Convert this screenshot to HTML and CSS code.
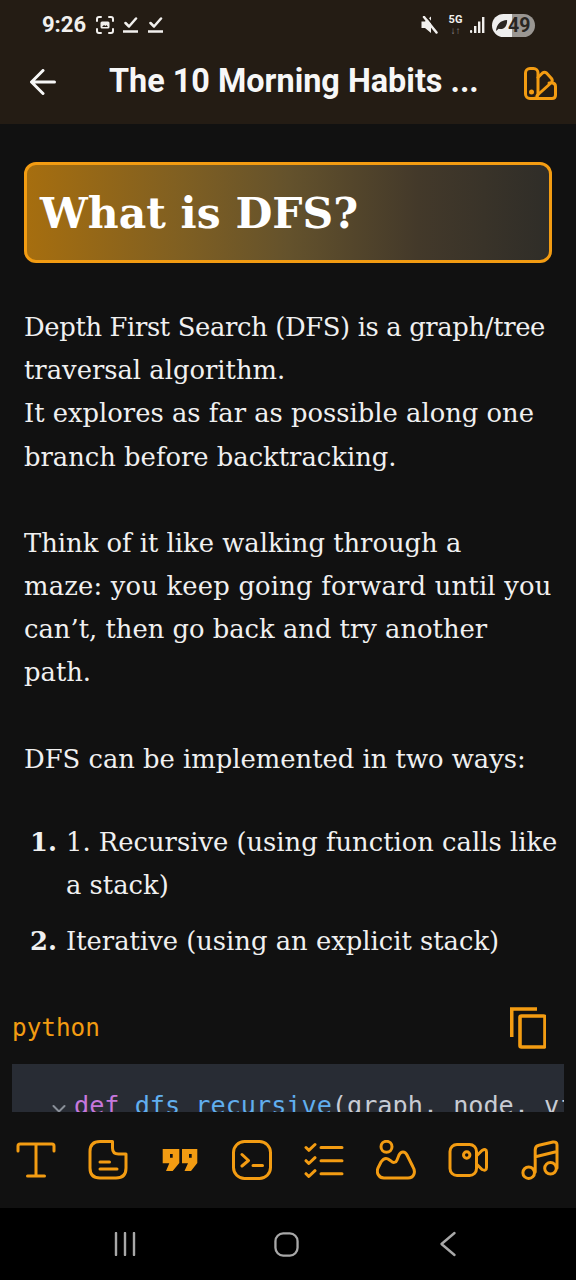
FILE: index.html
```html
<!DOCTYPE html>
<html lang="en">
<head>
<meta charset="utf-8">
<title>What is DFS?</title>
<link rel="stylesheet" href="styles.css">
</head>
<body>
<div class="phone">
  <header class="top">
    <div class="status">
      <span class="time">9:26</span>
      <svg class="st-shot" viewBox="0 0 18 18"><path d="M1 5V3Q1 1 3 1H5M13 1H15Q17 1 17 3V5M17 13V15Q17 17 15 17H13M5 17H3Q1 17 1 15V13"/><rect class="fill" x="4.500" y="5.500" width="9" height="7" rx="1.500"/><path class="dark" d="M6 11L8 9L9.500 10L10.500 9L12 11Z"/></svg>
      <svg class="st-check" viewBox="0 0 15 18"><path d="M2.500 7L6 10.500L13 2.500M0.500 15.500H14.500"/></svg>
      <svg class="st-check" viewBox="0 0 15 18"><path d="M2.500 7L6 10.500L13 2.500M0.500 15.500H14.500"/></svg>
      <span class="st-spacer"></span>
      <svg class="st-mute" viewBox="0 0 17 18"><path class="fill" d="M0.500 5.500H4L10 0.500V17L4 12H0.500Z"/><path class="slash-dark" d="M5 0L17 15"/><path d="M3 1L15.500 16.500"/></svg>
      <span class="st-net"><b>5G</b><i>↓↑</i></span>
      <svg class="st-signal" viewBox="0 0 16 16"><rect class="fill" x="1" y="13" width="2.200" height="3" rx="1"/><rect class="fill" x="5" y="9" width="2.400" height="7"/><rect class="fill" x="9" y="4.500" width="2.400" height="11.500"/><rect class="fill" x="13" y="0" width="2.400" height="16"/></svg>
      <span class="battery"><svg class="leaf" viewBox="0 0 14 14"><path d="M1 13C2 5 6 1.500 13 1C13.500 8 9 12 4 10.500Z"/></svg>49</span>
    </div>
    <div class="appbar">
      <svg class="back" viewBox="0 0 26 26"><path d="M24.500 13H2M13 1.500L1.500 13L13 24.500"/></svg>
      <h1 class="title">The 10 Morning Habits ...</h1>
      <svg class="palette" viewBox="0 0 33 33"><rect x="1.500" y="1.500" width="12.500" height="30" rx="4.500"/><circle class="orange-fill" cx="7.500" cy="25" r="2.500"/><path d="M14 10.500L18.500 6Q20.500 4.500 22.500 6L27.500 11.500Q29 13.500 27.500 15.500L13 28.500M25 16H28.500Q31.500 16.500 31.500 19.500V28Q31.500 31.500 28 31.500H7.500"/></svg>
    </div>
  </header>

  <main class="content">
    <h2 class="banner">What is DFS?</h2>
    <p class="para"><span class="tight">Depth First Search (DFS) is a graph/tree</span> traversal algorithm.<br>It explores as far as possible along one branch before backtracking.</p>
    <p class="para">Think of it like walking through a<br><span class="loose">maze: you keep going forward until you</span> can’t, then go back and try another path.</p>
    <p class="para">DFS can be implemented in two ways:</p>
    <ol class="list">
      <li>1. Recursive (using function calls like a stack)</li>
      <li>Iterative (using an explicit stack)</li>
    </ol>
    <section class="code">
      <div class="code-head">
        <span class="lang">python</span>
        <svg class="copy" viewBox="0 0 36 42"><path d="M1.700 30V2H27"/><rect x="10" y="9" width="25" height="31" rx="1.500"/></svg>
      </div>
      <pre class="code-body"><svg class="fold" viewBox="0 0 14 10"><path d="M1.500 2L7 7.500L12.500 2"/></svg><span class="kw">def</span> <span class="fn">dfs_recursive</span>(graph, node, visited=None):</pre>
    </section>
  </main>

  <nav class="tools">
    <svg viewBox="0 0 40 40"><path d="M2 11V6Q2 4 4 4H36Q38 4 38 6V11M20 4V36M11.500 36H28.500"/></svg>
    <svg viewBox="0 0 40 40"><path d="M24.500 1.500H12Q2 1.500 2 11.500V28Q2 38 12 38H28Q38 38 38 28V14H30.500Q24.500 14 24.500 8ZM12 22H21.500M12 29H29"/></svg>
    <svg viewBox="0 0 40 40"><path class="orange-fill" fill-rule="evenodd" d="M2.700 9H19.300V23L12.700 31H6L9.300 23.300H2.700ZM10 14V17.700H12.700V14ZM22 9H37.300V23L31 31H24.500L28 23.300H22ZM29 14V17.700H31.700V14Z"/></svg>
    <svg viewBox="0 0 40 40"><rect x="1.500" y="1.500" width="37" height="37" rx="11"/><path d="M10 14.500L16.500 20.500L10 26M21 25.500H30.500"/></svg>
    <svg viewBox="0 0 40 40"><path d="M17 7.500H38M17 20.700H38M17 33.700H38M2 7.500L4.800 10.300L11 4.500M2 20.700L4.800 23.500L11 17.700M2 33.700L4.800 36.500L11 30.700"/></svg>
    <svg viewBox="0 0 40 40"><circle cx="10.500" cy="6.800" r="5.500"/><path d="M8 38H32C38 38 40 32 37 27L31 15C29 11 25 11 23 15L21 20C20 23 17 23 15 21L12 19C9 17.500 7 19 5 22L2 28C0 33 3 38 8 38Z"/></svg>
    <svg viewBox="0 0 40 40"><rect x="2" y="4.500" width="26.500" height="31" rx="7"/><circle cx="18.700" cy="15" r="3.200"/><path d="M28.500 16L34 10.500Q38.500 8 38.500 12V27.500Q38.500 31.500 34 29.500L28.500 24"/></svg>
    <svg viewBox="0 0 40 40"><circle cx="8.700" cy="32.700" r="5.800"/><circle cx="30.500" cy="28.300" r="5.800"/><path d="M15.200 32V10Q15.200 6 19 5.200L33 2Q37 1.500 37 5V28M15.500 16.700L37 11.500"/></svg>
  </nav>

  <footer class="navbar">
    <svg class="nav-recent" viewBox="0 0 22 24"><path d="M2 1V23M11 1V23M20 1V23"/></svg>
    <svg class="nav-home" viewBox="0 0 26 26"><rect x="1.500" y="1.500" width="23" height="23" rx="8"/></svg>
    <svg class="nav-back" viewBox="0 0 18 26"><path d="M15.500 2L2.500 13L15.500 24"/></svg>
  </footer>
</div>
</body>
</html>
```

FILE: styles.css
```css
* { box-sizing: border-box; }
html, body { margin: 0; padding: 0; background: #111; }
.phone {
  width: 576px;
  height: 1280px;
  display: flex;
  flex-direction: column;
  overflow: hidden;
  background: #111;
}
svg { fill: none; stroke-linecap: round; stroke-linejoin: round; }
.top { background: #241c14; height: 124px; flex: none; }
.status {
  height: 50px;
  padding: 0 41px 0 42px;
  display: flex;
  align-items: center;
  color: #f2f0ee;
}
.status svg { stroke: #f2f0ee; stroke-width: 2.500; }
.status .fill { fill: #f2f0ee; stroke: none; }
.status .dark { fill: #241c14; stroke: none; }
.status .slash-dark { stroke: #241c14; stroke-width: 2; }
.time { font: 700 22px/1 Roboto, sans-serif; width: 54px; }
.st-shot { width: 18px; height: 18px; margin-right: 9px; }
.status .st-shot { stroke-width: 2; }
.st-check { width: 15px; height: 18px; margin-right: 10px; }
.st-spacer { flex: 1; }
.st-mute { width: 17px; height: 18px; margin-right: 10px; }
.st-net { display: flex; flex-direction: column; align-items: center; width: 15px; margin-right: 6px; font-family: Roboto, sans-serif; }
.st-net b { font-size: 11px; line-height: 10px; font-weight: 700; }
.st-net i { font-size: 10px; line-height: 9px; font-style: normal; color: #8c8a88; margin-top: 1px; }
.st-signal { width: 16px; height: 16px; margin-right: 7px; }
.battery {
  width: 43px;
  height: 23px;
  border-radius: 12px;
  background: linear-gradient(90deg, #eeeeee 0 47%, #9a9692 47% 100%);
  color: #2a2622;
  font: 700 19.500px/23px Roboto, sans-serif;
  display: flex;
  align-items: center;
  padding-left: 3px;
}
.status .leaf { width: 13px; height: 13px; flex: none; margin-right: 0; }
.status .leaf path { fill: #2a2622; stroke: none; }

.appbar { height: 66px; padding-left: 30px; display: flex; align-items: center; }
.back { width: 26px; height: 26px; margin-right: 53px; margin-bottom: 2px; stroke: #f7f7f7; stroke-width: 3; flex: none; }
.title { margin: 0 0 4px; flex: none; width: 380px; font: 700 32.400px/40px Roboto, sans-serif; color: #f7f7f7; white-space: nowrap; }
.palette { width: 33px; height: 33px; margin-left: 35px; margin-top: 1px; stroke: #f39c12; stroke-width: 3; flex: none; }
.orange-fill { fill: #f39c12; stroke: none; }

.content { flex: 1; min-height: 0; overflow: hidden; padding: 38px 24px 0; color: #f0f0f0; font-family: "DejaVu Serif", serif; font-size: 25.800px; line-height: 43.200px; }
.banner {
  margin: 0 0 43px;
  height: 101px;
  padding: 0 13px;
  border: 3px solid #f39c12;
  border-radius: 12px;
  background: linear-gradient(90deg, #a66e0f 0%, #7f5f22 30%, #64522c 50%, #43392a 75%, #2f2d28 100%);
  color: #fff;
  font: 700 42.500px/96px "DejaVu Serif", serif;
}
.tight { letter-spacing: -0.35px; }
.loose { letter-spacing: 0.2px; }
.para { margin: 0 0 43px; }
.list { margin: -3px -8px 0 0; padding: 0 0 0 42px; }
.list li { margin-bottom: 13px; }
.list li::marker { font-weight: 700; }
.code { margin: 39px -12px 0; }
.code-head { display: flex; justify-content: space-between; align-items: center; height: 52px; padding-right: 18px; }
.lang { font: 24.300px/1 "DejaVu Sans Mono", monospace; color: #f39c12; }
.copy { width: 36px; height: 42px; stroke: #f39c12; stroke-width: 3.600; stroke-linecap: butt; stroke-linejoin: miter; }
.code-body {
  margin: 10px 0 0;
  height: 120px;
  padding: 23px 0 0 40px;
  background: #282c34;
  color: #c8ccd4;
  font: 25.200px/38px "DejaVu Sans Mono", monospace;
  overflow: hidden;
  white-space: nowrap;
}
.fold { width: 14px; height: 10px; stroke: #8a9099; stroke-width: 2; margin-right: 8px; }
.kw { color: #c678dd; }
.fn { color: #61afef; }

.tools { flex: none; height: 96px; display: grid; grid-template-columns: repeat(8, 1fr); justify-items: center; align-items: center; background: #111; }
.tools svg { width: 40px; height: 40px; stroke: #f39c12; stroke-width: 3; }
.navbar { flex: none; height: 72px; background: #000; display: flex; align-items: center; padding-left: 114px; }
.navbar svg { stroke: #a8a8a8; stroke-width: 2.400; flex: none; }
.nav-recent { width: 22px; height: 24px; margin-right: 138px; }
.nav-home { width: 25px; height: 25px; margin-right: 140px; }
.nav-back { width: 18px; height: 26px; }
```
